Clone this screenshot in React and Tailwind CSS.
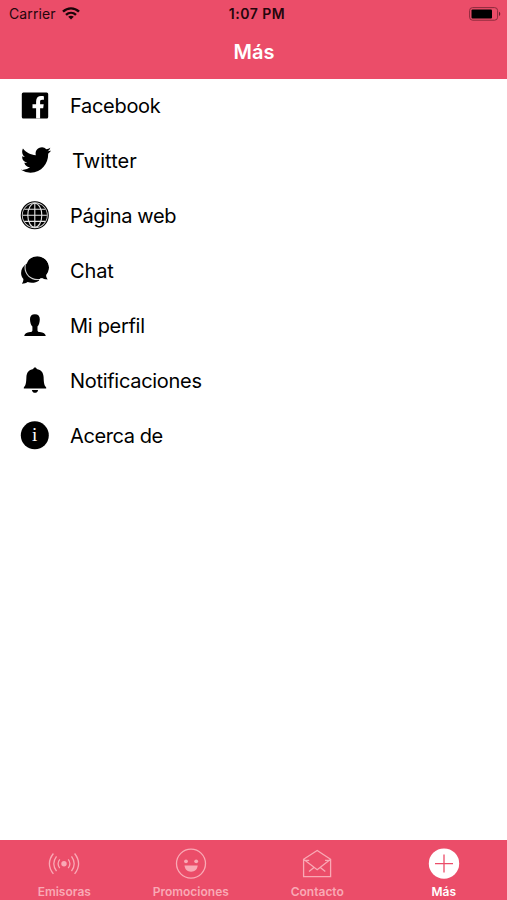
import { useState } from 'react';

const menuItems = [
  { label: 'Facebook', icon: FacebookIcon, text: 'tracking-[-0.3px]' },
  { label: 'Twitter', icon: TwitterIcon, text: 'ml-[2px] tracking-[0.05px]' },
  { label: 'Página web', icon: GlobeIcon, text: 'tracking-[-0.35px]' },
  { label: 'Chat', icon: ChatIcon, text: 'tracking-[-0.1px]' },
  { label: 'Mi perfil', icon: ProfileIcon, text: 'tracking-[-0.3px]' },
  { label: 'Notificaciones', icon: BellIcon, text: 'tracking-[-0.3px]' },
  { label: 'Acerca de', icon: InfoIcon, text: 'tracking-[-0.4px]' },
];

const tabs = [
  { label: 'Emisoras', icon: BroadcastIcon },
  { label: 'Promociones', icon: SmileIcon },
  { label: 'Contacto', icon: MailIcon },
  { label: 'Más', icon: PlusIcon },
];

function MenuSvg({ children }) {
  return (
    <svg width="33" height="33" viewBox="0 0 33 33" fill="#000" className="shrink-0">
      {children}
    </svg>
  );
}

function FacebookIcon() {
  return (
    <MenuSvg>
      <rect x="3.8" y="3.4" width="26.4" height="26" rx="1.5" />
      <path
        fill="#fff"
        d="M18.1 29.4V19.3h-3.6v-4h3.6v-3.1c0-3.4 2-5.2 5-5.2 1.4 0 2.1.1 2.8.2v3.500h-1.800c-1.700 0-2 .8-2 1.900v2.700h3.600l-.5 4h-3.100v10.100z"
      />
    </MenuSvg>
  );
}

function TwitterIcon() {
  return (
    <MenuSvg>
      <path
        transform="translate(2.9 .4) scale(1.265 1.3)"
        d="M23.953 4.57a10 10 0 01-2.825.775 4.958 4.958 0 002.163-2.723c-.951.555-2.005.959-3.127 1.184a4.92 4.92 0 00-8.384 4.482C7.69 8.095 4.067 6.13 1.64 3.162a4.822 4.822 0 00-.666 2.475c0 1.71.87 3.213 2.188 4.096a4.904 4.904 0 01-2.228-.616v.06a4.923 4.923 0 003.946 4.827 4.996 4.996 0 01-2.212.085 4.936 4.936 0 004.604 3.417 9.867 9.867 0 01-6.102 2.105c-.39 0-.779-.023-1.17-.067a13.995 13.995 0 007.557 2.209c9.053 0 13.998-7.496 13.998-13.985 0-.21 0-.42-.015-.63A9.935 9.935 0 0024 4.59z"
      />
    </MenuSvg>
  );
}

function GlobeIcon() {
  return (
    <MenuSvg>
      <circle cx="16.8" cy="16.3" r="13.5" fill="#d8d8d8" stroke="#000" strokeWidth="1.1" />
      <circle cx="16.8" cy="16.3" r="12.1" />
      <g fill="none" stroke="#e4e4e4" strokeWidth="1.1">
        <path d="M16.8 4.2v24.2M4.7 16.300h24.200M6.300 10.200h21M6.300 22.400h21" />
        <ellipse cx="16.8" cy="16.3" rx="7" ry="12.1" />
      </g>
    </MenuSvg>
  );
}

function ChatIcon() {
  return (
    <MenuSvg>
      <path d="M9 9.5C5 11.8 3.1 15.200 3.100 18.900c0 2.400.8 4.500 2.300 6.200 0 1.800-.4 3.200-1.500 4.600 2.300-.1 4.300-.7 5.700-1.700 3.900 1.300 8.300.8 11.600-1.600z" />
      <path
        stroke="#d0d0d0"
        strokeWidth="2.2"
        paintOrder="stroke"
        clipPath="url(#bubbleGap)"
        d="M19.3 2.200c6.500 0 11.700 5.100 11.700 11.400 0 2.900-1 5.300-2.700 7.300 0 1.700.5 3.100 1.700 4.700-2.400-.1-4.100-.8-5.400-1.700a12 12 0 0 1-5.300 1.200c-6.500 0-11.700-5.100-11.700-11.500S12.800 2.200 19.300 2.200z"
      />
      {/* keeps the light gap only where the two bubbles overlap */}
      <clipPath id="bubbleGap">
        <path d="M9 9.5C5 11.8 3.100 15.200 3.100 18.900L9 28l11-1.700 3-2.400c1.700 1.200 4 1.700 7 1.700-1.200-1.600-1.700-3-1.700-4.700 1.700-2 2.700-4.400 2.700-7.300 0-6.300-5.200-11.400-11.700-11.400C14 2.200 10 5.200 9 9.500z" />
      </clipPath>
    </MenuSvg>
  );
}

function ProfileIcon() {
  return (
    <MenuSvg>
      <path d="M16.900 5.300c3.200 0 5 1.900 4.900 5-.1 3.200-.8 5.600-2.300 7.300v3.600c0 1.100.7 1.600 2.200 1.900 3.800.7 5.700 1.500 6.100 3.900H6.200c.4-2.400 2.200-3.200 6-3.900 1.500-.3 2.200-.8 2.200-1.900v-3.600c-1.600-1.700-2.300-4.100-2.400-7.300-.1-3.100 1.700-5 4.900-5z" />
    </MenuSvg>
  );
}

function BellIcon() {
  return (
    <MenuSvg>
      <path d="M17 3.600c1 0 1.600.6 1.700 1.300 4.700.8 6.700 3.800 6.900 8.100.2 5.700.5 8.200 2.600 10.400v1.200H5.800v-1.200c2.100-2.200 2.400-4.700 2.600-10.400.2-4.300 2.200-7.300 6.900-8.100.1-.7.700-1.300 1.700-1.300z" />
      <path d="M13.900 25.900h6.200c-.3 1.800-1.400 2.900-3.100 2.900s-2.800-1.100-3.100-2.900z" />
    </MenuSvg>
  );
}

function InfoIcon() {
  return (
    <MenuSvg>
      <circle cx="16.8" cy="16.3" r="14" />
      <text x="16.6" y="22.4" textAnchor="middle" fill="#fff" fontFamily="Liberation Serif, serif" fontSize="19">
        i
      </text>
    </MenuSvg>
  );
}

function TabSvg({ children }) {
  return (
    <svg width="34" height="34" viewBox="0 0 34 34" fill="none" stroke="currentColor" strokeWidth="1.3">
      {children}
    </svg>
  );
}

function BroadcastIcon() {
  return (
    <TabSvg>
      <circle cx="17" cy="16.700" r="2.700" fill="currentColor" stroke="none" />
      <path d="M12.800 12.300q-3.400 4.400 0 8.800M9.500 9.300q-5.400 7.400 0 14.800M6.400 6.500q-8 10.200 0 20.400" />
      <path d="M21.200 12.300q3.400 4.400 0 8.800M24.500 9.300q5.400 7.400 0 14.800M27.600 6.500q8 10.200 0 20.400" />
    </TabSvg>
  );
}

function SmileIcon() {
  return (
    <TabSvg>
      <circle cx="17" cy="16.600" r="14.500" />
      <circle cx="12" cy="14.300" r="1.900" fill="currentColor" stroke="none" />
      <circle cx="22.200" cy="14.300" r="1.900" fill="currentColor" stroke="none" />
      <path d="M10.500 18.600h13.200c-.3 3.800-2.900 6.200-6.600 6.200s-6.300-2.400-6.600-6.200z" fill="currentColor" stroke="none" />
    </TabSvg>
  );
}

function MailIcon() {
  return (
    <TabSvg>
      <path d="M3.600 12.300 17.200 3.500l13.400 8.800v17.300h-27zM3.600 12.300l13.600 10.400 13.400-10.400M4 13.300h5.200M25 13.300h5.200M9 24.500l5-4M25.300 24.500l-5-4" />
    </TabSvg>
  );
}

function PlusIcon() {
  return (
    <TabSvg>
      <circle cx="17" cy="16.600" r="15.200" fill="currentColor" stroke="none" />
      <path d="M17 7.600v18M8 16.600h18" stroke="#eb4d69" />
    </TabSvg>
  );
}

function StatusBar() {
  return (
    <div className="grid h-[27px] grid-cols-3 items-center text-[14px] text-[#24060c]">
      <div className="flex items-center gap-[6px] pl-[9px]">
        <span className="tracking-[0.1px]">Carrier</span>
        <svg width="18" height="13" viewBox="0 0 18 13" fill="none" stroke="#1a0408" strokeWidth="2.4">
          <path d="M1 4.700c4.600-4.400 11.400-4.400 16 0M4 7.900c2.900-2.700 7.100-2.700 10 0" />
          <path d="M9 12.500 6.200 9.700c1.600-1.400 4-1.400 5.600 0z" fill="#1a0408" stroke="none" />
        </svg>
      </div>
      <span className="pl-[7px] text-center font-semibold tracking-[0.5px]">1:07 PM</span>
      <div className="flex justify-end pr-[6px]">
        <svg width="32" height="14" viewBox="0 0 32 14">
          <rect x="0.6" y="0.6" width="28" height="12.6" rx="3" fill="none" stroke="#8c2a3c" />
          <rect x="2.5" y="2.4" width="20.5" height="9" rx="1" fill="#000" />
          <path d="M30 4.800c1.700.6 1.700 3.600 0 4.200z" fill="#6b1f2d" />
        </svg>
      </div>
    </div>
  );
}

export default function App() {
  const [active, setActive] = useState('Más');

  return (
    <div className="flex h-screen w-full flex-col bg-white font-['Inter',sans-serif]">
      <header className="h-[79px] shrink-0 bg-[#eb4d69]">
        <StatusBar />
        <h1 className="pl-px text-center text-[20px] leading-[50px] font-semibold text-white">Más</h1>
      </header>

      <ul className="-mt-px flex-1">
        {menuItems.map(({ label, icon: Icon, text }) => (
          <li key={label} className="flex h-[55px] items-center gap-[19px] pl-[18px]">
            <Icon />
            <span className={`text-[20px] text-black ${text}`}>{label}</span>
          </li>
        ))}
      </ul>

      {/* Bottom tabs */}
      <nav className="grid h-[60px] shrink-0 grid-cols-4 bg-[#eb4d69] pl-px">
        {tabs.map(({ label, icon: Icon }) => (
          <button
            key={label}
            onClick={() => setActive(label)}
            className={`flex flex-col items-center pt-[7px] ${active === label ? 'text-white' : 'text-[#f9a9b5]'}`}
          >
            <Icon />
            <span className="mt-[3px] text-[12px] leading-[15px] font-semibold">{label}</span>
          </button>
        ))}
      </nav>
    </div>
  );
}
